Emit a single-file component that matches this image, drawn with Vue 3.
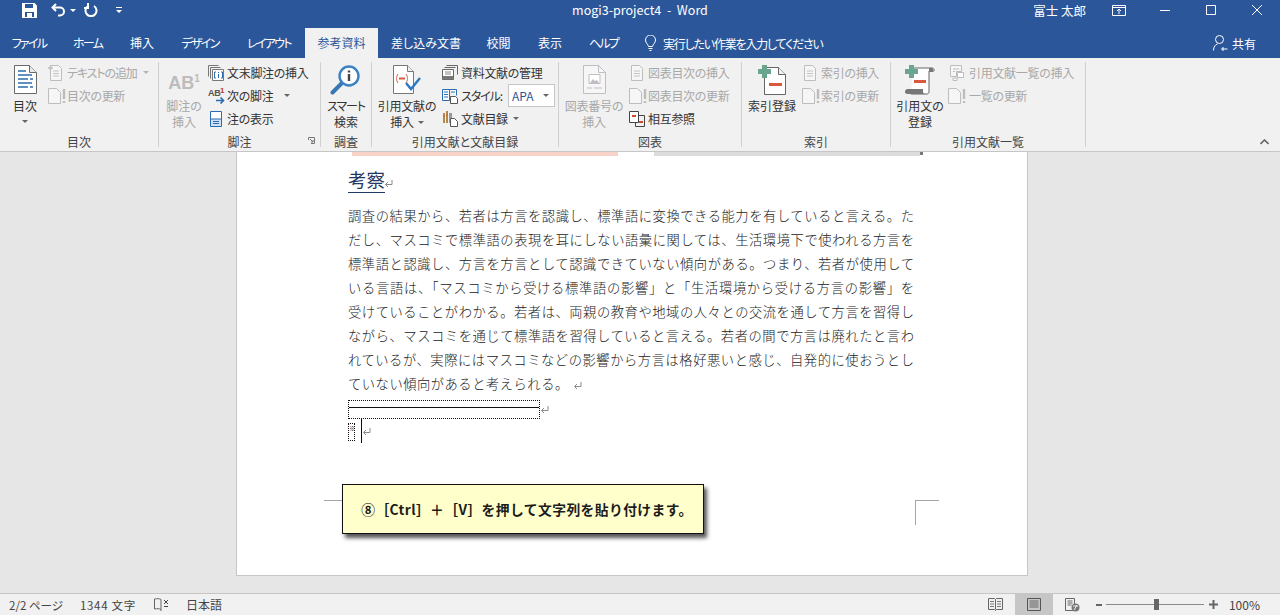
<script setup>
const tabs = [
  { label: 'ファイル', width: 58, tight: true },
  { label: 'ホーム', width: 59, tight: true },
  { label: '挿入', width: 50 },
  { label: 'デザイン', width: 66, tight: true },
  { label: 'レイアウト', width: 72, tight: true },
  { label: '参考資料', width: 73, active: true },
  { label: '差し込み文書', width: 96 },
  { label: '校閲', width: 49 },
  { label: '表示', width: 54 },
  { label: 'ヘルプ', width: 53, tight: true }
]

const bodyLines = [
  '調査の結果から、若者は方言を認識し、標準語に変換できる能力を有していると言える。た',
  'だし、マスコミで標準語の表現を耳にしない語彙に関しては、生活環境下で使われる方言を',
  '標準語と認識し、方言を方言として認識できていない傾向がある。つまり、若者が使用して',
  'いる言語は、「マスコミから受ける標準語の影響」と「生活環境から受ける方言の影響」を',
  '受けていることがわかる。若者は、両親の教育や地域の人々との交流を通して方言を習得し',
  'ながら、マスコミを通じて標準語を習得していると言える。若者の間で方言は廃れたと言わ',
  'れているが、実際にはマスコミなどの影響から方言は格好悪いと感じ、自発的に使おうとし'
]
</script>

<template>
  <div class="word">
    <svg class="defs" width="0" height="0">
      <symbol id="upd" viewBox="0 0 20 16">
        <path d="M.5.5h8l4 4v11H.5z" fill="#f6f6f6" stroke="#bdbdbd" />
        <path d="M16 1v10M16 13v2" stroke="#bdbdbd" stroke-width="2.4" />
      </symbol>
      <symbol id="lst" viewBox="0 0 16 16">
        <path d="M2.500.5h8l3 3v12h-11z" fill="#f6f6f6" stroke="#bdbdbd" />
        <path d="M5 6h6M5 8.500h6M5 11h6" stroke="#c4c4c4" />
      </symbol>
      <symbol id="ret" viewBox="0 0 9 9">
        <path d="M8 1v4.500H2M4 3 1.500 5.500 4 8" fill="none" stroke="#8a8a8a" />
      </symbol>
    </svg>

    <header class="titlebar">
      <div class="qat">
        <svg class="qat-save" width="15" height="15" viewBox="0 0 15 15">
          <path d="M0 0h12.500L15 2.500V15H0z" fill="#fff" />
          <path d="M3 1h8v4H3zM3 9h9v5H3z" fill="#2b579a" />
          <path d="M5 10h5v4H5z" fill="#fff" />
        </svg>
        <svg class="qat-undo" width="15" height="14" viewBox="0 0 15 14">
          <path d="M5 1 1.500 4.500 5 8M2 4.500h7a4 4 0 0 1 0 8H7" fill="none" stroke="#fff" stroke-width="2" />
        </svg>
        <span class="qat-caret"></span>
        <svg class="qat-redo" width="14" height="14" viewBox="0 0 14 14">
          <path d="M4 3a5.500 5.500 0 1 0 6 0M4 0v5H0" fill="none" stroke="#fff" stroke-width="2" />
        </svg>
        <svg class="qat-more" width="6" height="6" viewBox="0 0 6 6">
          <path d="M0 0h6v1H0zM0 3h6L3 6z" fill="#fff" />
        </svg>
      </div>
      <div class="doc-title">mogi3-project4&nbsp; - &nbsp;Word</div>
      <div class="win">
        <span class="user">富士 太郎</span>
        <button class="win-btn">
          <svg width="14" height="11" viewBox="0 0 14 11">
            <path d="M.5.5h13v10H.5zM.5 2.500h13M7 9V4.500M5 6l2-2 2 2" fill="none" stroke="#fff" />
          </svg>
        </button>
        <button class="win-btn">
          <svg width="10" height="1" viewBox="0 0 10 1"><path d="M0 .5h10" stroke="#fff" /></svg>
        </button>
        <button class="win-btn">
          <svg width="10" height="10" viewBox="0 0 10 10"><path d="M.5.5h9v9h-9z" fill="none" stroke="#fff" /></svg>
        </button>
        <button class="win-btn">
          <svg width="10" height="10" viewBox="0 0 10 10"><path d="M0 0l10 10M10 0 0 10" stroke="#fff" /></svg>
        </button>
      </div>
    </header>

    <nav class="tabs">
      <span
        v-for="tab in tabs"
        :key="tab.label"
        class="tab"
        :class="{ active: tab.active, tight: tab.tight }"
        :style="{ width: tab.width + 'px' }"
      >{{ tab.label }}</span>
      <span class="tell">
        <svg width="11" height="16" viewBox="0 0 11 16">
          <path d="M3.500 11.500C3 9 .5 8 .5 5a5 5 0 0 1 10 0c0 3-2.500 4-3 6.500zM3.500 13.500h4M4.500 15.500h2" fill="none" stroke="#fff" />
        </svg>
        <span class="tell-text">実行したい作業を入力してください</span>
      </span>
      <span class="share">
        <svg width="15" height="16" viewBox="0 0 15 16">
          <circle cx="6.500" cy="4.500" r="4" fill="none" stroke="#fff" />
          <path d="M.5 15.500c0-4 2-6 4-6.500M10 12v4M8 14h6.500" fill="none" stroke="#fff" />
        </svg>
        共有
      </span>
    </nav>

    <section class="ribbon">
      <div class="group g-toc">
        <div class="group-body">
          <div class="big b-toc">
            <svg class="big-icon" width="23" height="29" viewBox="0 0 23 29">
              <path d="M.5.5h15l7 7v21H.5z" fill="#fff" stroke="#6a6a6a" />
              <path d="M15.500.5v7h7" fill="#e8e8e8" stroke="#6a6a6a" />
              <path d="M4 6h8M4 10h14M4 14h10M4 18h14M4 22h10" stroke="#2b6cb0" stroke-width="1.500" />
              <path d="M16 14h3M16 22h3" stroke="#2b6cb0" stroke-width="1.500" />
            </svg>
            <span>目次</span>
            <i class="caret"></i>
          </div>
          <div class="stack">
            <div class="row off">
              <svg class="ico" viewBox="0 0 16 16">
                <use href="#lst" />
                <path d="M0 3h5M2.500 .5v5" stroke="#bdbdbd" stroke-width="1.500" />
              </svg>
              <span class="kana">テキストの追加</span><i class="caret off-caret"></i>
            </div>
            <div class="row off">
              <svg class="ico wide" viewBox="0 0 20 16"><use href="#upd" /></svg>
              目次の更新
            </div>
          </div>
        </div>
        <div class="group-label">目次</div>
      </div>

      <div class="group g-note">
        <div class="group-body">
          <div class="big off b-note">
            <div class="big-icon ab">AB<sup>1</sup></div>
            <span>脚注の<br />挿入</span>
          </div>
          <div class="stack">
            <div class="row">
              <svg class="ico" viewBox="0 0 16 16">
                <path d="M.5.5h10M2.500 2.500h10M.5.5v11M2.500 2.500v11" fill="none" stroke="#777" />
                <path d="M4.500 4.500h11v11h-11z" fill="#fff" stroke="#777" />
                <path d="M8 7H6.500v6H8M13 7h1.500v6H13M10.500 7v1M10.500 9v4" fill="none" stroke="#2b6cb0" />
              </svg>
              文末脚注の挿入
            </div>
            <div class="row">
              <span class="ico ab-small">AB<em>1</em>
                <svg width="9" height="7" viewBox="0 0 9 7"><path d="M0 3.500h7M4.500 .5 7.500 3.500 4.500 6.500" fill="none" stroke="#2b6cb0" stroke-width="1.600" /></svg>
              </span>
              次の脚注<i class="caret next-caret"></i>
            </div>
            <div class="row">
              <svg class="ico" viewBox="0 0 16 16">
                <path d="M2.500.5h11v15h-11z" fill="#fff" stroke="#2b6cb0" />
                <path d="M3 8h10v7H3z" fill="#cfe0f2" />
                <path d="M2.500 8h11M5 10.500h6M5 12.500h6" stroke="#2b6cb0" />
              </svg>
              注の表示
            </div>
          </div>
        </div>
        <div class="group-label">脚注</div>
        <svg class="launcher" width="7" height="7" viewBox="0 0 7 7">
          <path d="M.5 3V.5H6.500V6.500H3M2 2l3 3M3 5h2V3" fill="none" stroke="#777" />
        </svg>
      </div>

      <div class="group g-search">
        <div class="group-body">
          <div class="big b-search">
            <svg class="big-icon" width="32" height="30" viewBox="0 0 32 30">
              <path d="M12 18 2.500 27.500" stroke="#3a78b5" stroke-width="4" stroke-linecap="round" />
              <circle cx="19" cy="11" r="9.500" fill="#fff" stroke="#3a82c4" stroke-width="2.400" />
              <path d="M19 9v7M19 5.500v2" stroke="#444" stroke-width="2.400" />
            </svg>
            <span><span class="kana">スマート</span><br />検索</span>
          </div>
        </div>
        <div class="group-label">調査</div>
      </div>

      <div class="group g-cite">
        <div class="group-body">
          <div class="big b-cite">
            <svg class="big-icon" width="29" height="29" viewBox="0 0 29 29">
              <path d="M.5.5h14l6 6v22H.5z" fill="#fff" stroke="#777" />
              <path d="M14.500.5v6h6" fill="#eee" stroke="#777" />
              <path d="M5 9c-2 3-2 6 0 9M13 9c2 3 2 6 0 9" fill="none" stroke="#d9593d" />
              <path d="M6 13.500h6" stroke="#d9593d" stroke-width="2" />
              <path d="M13 18l5 6 9-11" fill="none" stroke="#2b79c2" stroke-width="2.400" />
            </svg>
            <span>引用文献の<br />挿入<i class="caret inline-caret"></i></span>
          </div>
          <div class="stack">
            <div class="row">
              <svg class="ico" viewBox="0 0 16 16">
                <path d="M4.500 .5h11v9M2.500 2.500h11" fill="none" stroke="#666" />
                <path d="M.5 4.500h11v10H.5z" fill="#fff" stroke="#666" />
                <path d="M.5 11h11v3.500H.5z" fill="#777" />
                <path d="M3 7h6M3 9h6" stroke="#888" />
              </svg>
              資料文献の管理
            </div>
            <div class="row">
              <svg class="ico" viewBox="0 0 16 16">
                <path d="M.5 1.500h7v11h-7zM7.500 1.500h7v6" fill="#fff" stroke="#2b6cb0" />
                <path d="M2 4h4M2 6.500h4M2 9h4M9 4h4" stroke="#2b6cb0" />
                <path d="M8.500 8.500h5l2 2v5h-7z" fill="#fff" stroke="#555" />
              </svg>
              <span class="kana">スタイル:</span>
              <span class="combo">APA<i class="caret combo-caret"></i></span>
            </div>
            <div class="row">
              <svg class="ico" viewBox="0 0 16 16">
                <path d="M1 2h2v10H1zM4 0h2v12H4z" fill="#b28a4c" />
                <path d="M7 2h3v10H7z" fill="#9a9a9a" />
                <path d="M1 5h2M4 4h2" stroke="#d9593d" />
                <path d="M8.500 7.500h4l3 3v5h-7z" fill="#fff" stroke="#555" />
              </svg>
              文献目録<i class="caret small-caret"></i>
            </div>
          </div>
        </div>
        <div class="group-label">引用文献と文献目録</div>
      </div>

      <div class="group g-fig">
        <div class="group-body">
          <div class="big off b-fig">
            <svg class="big-icon" width="23" height="29" viewBox="0 0 23 29">
              <path d="M.5.500h15l7 7v21H.5z" fill="#f6f6f6" stroke="#c2bcc4" />
              <path d="M15.500.500v7h7" fill="none" stroke="#c2bcc4" />
              <path d="M6 9.500h11v9H6z" fill="#fff" stroke="#c2bcc4" />
              <path d="M7 18l3-4 2 2 2-1 2 3z" fill="#c2bcc4" />
              <path d="M4 23h5M11 23h8" stroke="#c2bcc4" />
            </svg>
            <span>図表番号の<br />挿入</span>
          </div>
          <div class="stack">
            <div class="row off">
              <svg class="ico" viewBox="0 0 16 16"><use href="#lst" /></svg>
              図表目次の挿入
            </div>
            <div class="row off">
              <svg class="ico wide" viewBox="0 0 20 16"><use href="#upd" /></svg>
              図表目次の更新
            </div>
            <div class="row">
              <svg class="ico" viewBox="0 0 16 16">
                <path d="M.5.5h9v11h-9z" fill="#fff" stroke="#444" />
                <path d="M9.500 4.500h6v11h-9v-4" fill="none" stroke="#444" />
                <path d="M3 5h4M10 11h4" stroke="#d2492a" stroke-width="2" />
              </svg>
              相互参照
            </div>
          </div>
        </div>
        <div class="group-label">図表</div>
      </div>

      <div class="group g-idx">
        <div class="group-body">
          <div class="big b-idx">
            <svg class="big-icon" width="28" height="30" viewBox="0 0 28 30">
              <path d="M6.500 2.500h14l7 7v20h-21z" fill="#fff" stroke="#666" />
              <path d="M20.500 2.500v7h7" fill="#eee" stroke="#666" />
              <path d="M4 0h5v4h4v5H9v4H4V9H0V4h4z" fill="#6aa58d" />
              <path d="M11 18h13v3H11z" fill="#d9593d" />
            </svg>
            <span>索引登録</span>
          </div>
          <div class="stack">
            <div class="row off">
              <svg class="ico" viewBox="0 0 16 16"><use href="#lst" /></svg>
              索引の挿入
            </div>
            <div class="row off">
              <svg class="ico wide" viewBox="0 0 20 16"><use href="#upd" /></svg>
              索引の更新
            </div>
          </div>
        </div>
        <div class="group-label">索引</div>
      </div>

      <div class="group g-auth">
        <div class="group-body">
          <div class="big b-auth">
            <svg class="big-icon" width="30" height="30" viewBox="0 0 30 30">
              <path d="M8 3h19c2 0 2.500 2 2 3h-5v21c0 1-1 2-2 2H6" fill="#fff" stroke="#666" />
              <path d="M24 3h4v4h-4zM0 27c0-2 1-3 3-3h15v3c0 1 1 2 2 2H3c-2 0-3-1-3-2z" fill="#777" />
              <path d="M4 0h5v4h4v5H9v4H4V9H0V4h4z" fill="#6aa58d" />
              <path d="M9 15h12v3H9z" fill="#d9593d" />
            </svg>
            <span>引用文の<br />登録</span>
          </div>
          <div class="stack">
            <div class="row off auth-row">
              <svg class="ico" viewBox="0 0 16 16">
                <path d="M2.500.5h11v6h-5v5h-6zM5 13h4v2.500H5z" fill="#f6f6f6" stroke="#bdbdbd" />
                <path d="M9.500 7.500h6v5h-6z" fill="#fff" stroke="#bdbdbd" />
                <path d="M5 4h6M5 6.500h2" stroke="#bdbdbd" />
              </svg>
              引用文献一覧の挿入
            </div>
            <div class="row off auth-row">
              <svg class="ico wide" viewBox="0 0 20 16"><use href="#upd" /></svg>
              一覧の更新
            </div>
          </div>
        </div>
        <div class="group-label">引用文献一覧</div>
      </div>

      <svg class="collapse" width="9" height="6" viewBox="0 0 9 6">
        <path d="M.5 5 4.500 1 8.500 5" fill="none" stroke="#666" stroke-width="1.600" />
      </svg>
    </section>

    <main class="doc">
      <article class="page">
        <div class="cut-row">
          <span class="cut-pink"></span>
          <span class="cut-gray"></span>
          <span class="cut-tick"></span>
        </div>
        <h2 class="heading"><span>考察</span><svg class="ret" viewBox="0 0 9 9"><use href="#ret" /></svg></h2>
        <p v-for="line in bodyLines" :key="line" class="line">{{ line }}</p>
        <p class="line last">ていない傾向があると考えられる。<svg class="ret" viewBox="0 0 9 9"><use href="#ret" /></svg></p>
        <div class="sep-box">
          <div class="sep-frame"><span></span></div>
          <svg class="ret" viewBox="0 0 9 9"><use href="#ret" /></svg>
        </div>
        <div class="note-row">
          <span class="note-mark">※</span>
          <span class="cursor"></span>
          <svg class="ret" viewBox="0 0 9 9"><use href="#ret" /></svg>
        </div>

        <span class="crop crop-left"></span>
        <span class="crop crop-right"></span>
        <div class="callout">⑧［Ctrl］＋［V］を押して文字列を貼り付けます。</div>
      </article>
    </main>

    <footer class="status">
      <span class="st-pages">2/2 ページ</span>
      <span class="st-words">1344 文字</span>
      <svg class="st-book" width="15" height="14" viewBox="0 0 15 14">
        <path d="M7 1.500C5.500.5 3.500.5.500 1v10c3-.5 5-.5 6.500.5V1.500M7 13v-1.500" fill="none" stroke="#666" />
        <path d="M10 2l4 4M14 2l-4 4M10 8.500h4" stroke="#444" />
      </svg>
      <span class="st-lang">日本語</span>

      <div class="st-right">
        <svg width="15" height="13" viewBox="0 0 15 13">
          <path d="M.5.5h6l1 1 1-1h6v11h-6l-1 1-1-1h-6zM7.500 1.500v10" fill="none" stroke="#666" />
          <path d="M2 3.500h4M2 6h4M2 8.500h4M9 3.500h4M9 6h4M9 8.500h4" stroke="#777" />
        </svg>
        <span class="view-on">
          <svg width="14" height="13" viewBox="0 0 14 13">
            <path d="M.5.5h13v12H.5z" fill="none" stroke="#555" />
            <path d="M2.500 3h9M2.500 5h9M2.500 7h9M2.500 9h9" stroke="#666" />
          </svg>
        </span>
        <svg width="15" height="14" viewBox="0 0 15 14">
          <path d="M.5.5h9v12h-9zM2.500 3h5M2.500 5h5M2.500 7h4" fill="none" stroke="#666" />
          <circle cx="10.500" cy="9.500" r="4" fill="#777" />
          <path d="M8 8h5M9 12l3-5" stroke="#eee" />
        </svg>
        <span class="zoom-minus"></span>
        <span class="slider"><i></i></span>
        <svg class="zoom-plus" width="9" height="9" viewBox="0 0 9 9"><path d="M0 4.500h9M4.500 0v9" stroke="#666" stroke-width="2" /></svg>
        <span class="zoom-val">100%</span>
      </div>
    </footer>
  </div>
</template>

<style>
html, body {
  margin: 0;
  overflow: hidden;
}
</style>

<style scoped>
.word {
  width: 1280px;
  height: 615px;
  display: flex;
  flex-direction: column;
  overflow: hidden;
  font-family: "Noto Sans CJK JP", "Liberation Sans", sans-serif;
  font-feature-settings: "palt";
  font-size: 12px;
  color: #333;
  background: #e6e6e6;
}
.defs {
  position: absolute;
}

/* title bar */
.titlebar {
  height: 28px;
  flex: none;
  box-sizing: border-box;
  padding-bottom: 8px;
  display: grid;
  grid-template-columns: 1fr auto 1fr;
  align-items: center;
  background: #2b579a;
  color: #fff;
}
.qat {
  display: flex;
  align-items: center;
  padding-left: 22px;
}
.qat-undo {
  margin-left: 14px;
}
.qat-caret {
  margin-left: 4px;
  border: 3px solid transparent;
  border-top: 3px solid #fff;
  border-bottom: 0;
}
.qat-redo {
  margin-left: 8px;
}
.qat-more {
  margin-left: 18px;
}
.doc-title {
  font-family: "Noto Sans CJK JP", "Open Sans", sans-serif;
  font-size: 12.500px;
  line-height: 20px;
}
.win {
  display: flex;
  justify-content: flex-end;
  align-items: center;
  height: 20px;
}
.user {
  margin-right: 10px;
  font-size: 12.500px;
}
.win-btn {
  width: 46px;
  height: 20px;
  padding: 0;
  border: 0;
  background: none;
  display: flex;
  align-items: center;
  justify-content: center;
}

/* tabs */
.tabs {
  height: 30px;
  flex: none;
  display: flex;
  background: #2b579a;
  color: #fff;
  line-height: 29px;
}
.tab {
  text-align: center;
}
.tab.tight {
  letter-spacing: -1.700px;
}
.tab.active {
  background: #f1f1f1;
  color: #2b579a;
}
.tell {
  margin-left: 15px;
  display: flex;
  align-items: center;
  gap: 7px;
}
.tell-text {
  letter-spacing: -1.200px;
}
.share {
  margin-left: auto;
  padding-right: 24px;
  display: flex;
  align-items: center;
  gap: 4px;
}

/* ribbon */
.ribbon {
  height: 94px;
  flex: none;
  box-sizing: border-box;
  padding-top: 4px;
  display: flex;
  align-items: flex-start;
  position: relative;
  background: #f1f1f1;
  border-bottom: 1px solid #c6c6c6;
}
.group {
  height: 85px;
  box-sizing: border-box;
  display: flex;
  flex-direction: column;
  position: relative;
  border-right: 1px solid #d0d0d0;
}
.group-body {
  height: 72px;
  flex: none;
  display: flex;
}
.group-label {
  flex: none;
  text-align: center;
  line-height: 16px;
  color: #444;
}
.g-toc { width: 159px; }
.g-note { width: 162px; }
.g-search { width: 51px; }
.g-cite { width: 187px; }
.g-fig { width: 183px; }
.g-idx { width: 149px; }
.g-auth { width: 195px; }

.big {
  display: flex;
  flex-direction: column;
  align-items: center;
  text-align: center;
  line-height: 16px;
  flex: none;
}
.big-icon {
  height: 36px;
  margin-top: 3px;
  margin-bottom: -3px;
  display: block;
  flex: none;
}
svg.big-icon {
  height: 29px;
  margin-top: 3px;
  margin-bottom: 4px;
}
.b-search svg.big-icon, .b-idx svg.big-icon, .b-auth svg.big-icon {
  height: 30px;
  margin-bottom: 3px;
}
.b-toc { width: 36px; margin-left: 7px; margin-right: 5px; }
.b-note { width: 42px; margin-left: 4px; margin-right: 3px; }
.b-search { width: 46px; margin-left: 2px; }
.b-cite { width: 60px; margin-left: 5px; margin-right: 5px; letter-spacing: -.2px; }
.b-fig { width: 60px; margin-left: 5px; margin-right: 5px; letter-spacing: -.2px; }
.b-idx { width: 50px; margin-left: 5px; margin-right: 5px; }
.b-auth { width: 50px; margin-left: 4px; margin-right: 3px; }

.off, .off span {
  color: #a8a8a8;
}
.ab {
  font-family: "Liberation Sans", sans-serif;
  font-weight: 700;
  font-size: 18px;
  line-height: 36px;
  color: #bcbcbc;
}
.ab sup {
  font-size: 10px;
  line-height: 0;
}
.stack {
  margin-top: -1px;
  display: flex;
  flex-direction: column;
}
.row {
  height: 23px;
  display: flex;
  align-items: center;
  white-space: nowrap;
  gap: 3px;
  letter-spacing: -.3px;
}
.kana {
  letter-spacing: -1.100px;
}
.ico {
  width: 16px;
  height: 16px;
  flex: none;
}
.ico.wide {
  width: 20px;
  margin-right: -4px;
}
.auth-row {
  gap: 5px;
}
.ab-small {
  position: relative;
  font-family: "Liberation Sans", sans-serif;
  font-size: 9px;
  font-weight: 700;
  line-height: 10px;
  color: #555;
  letter-spacing: -.3px;
}
.ab-small em {
  position: absolute;
  top: -2px;
  left: 12px;
  font-style: normal;
  font-size: 8px;
  color: #c0392b;
}
.ab-small svg {
  position: absolute;
  left: 8px;
  top: 9px;
}
.caret {
  display: block;
  border: 3px solid transparent;
  border-top: 3px solid #666;
  border-bottom: 0;
  width: 0;
  margin-top: 6px;
}
.off-caret {
  border-top-color: #b5b5b5;
  margin: 0 0 0 3px;
}
.next-caret {
  margin: 0 0 0 8px;
}
.small-caret {
  margin: 0 0 0 2px;
}
.inline-caret {
  display: inline-block;
  margin: 0 0 2px 4px;
  vertical-align: middle;
}
.combo {
  width: 47px;
  height: 23px;
  margin-left: 3px;
  box-sizing: border-box;
  padding: 0 5px 0 3px;
  display: flex;
  align-items: center;
  justify-content: space-between;
  background: #fff;
  border: 1px solid #c6c6c6;
  color: #2b579a;
  letter-spacing: 0;
}
.combo-caret {
  margin: 0;
}
.launcher {
  position: absolute;
  right: 5px;
  bottom: 3px;
}
.collapse {
  position: absolute;
  right: 11px;
  bottom: 6px;
}

/* document */
.doc {
  flex: 1;
  min-height: 0;
  padding-left: 236px;
}
.page {
  width: 792px;
  height: 424px;
  box-sizing: border-box;
  padding-left: 111px;
  position: relative;
  background: #fff;
  border: 1px solid #c6c6c6;
  border-top: 0;
  font-weight: 300;
  color: #222;
}
.cut-row {
  height: 4px;
  display: flex;
  margin-left: 4px;
}
.cut-pink {
  width: 266px;
  background: #f8d3ca;
}
.cut-gray {
  width: 266px;
  margin-left: 36px;
  background: #dcdcdc;
}
.cut-tick {
  width: 3px;
  height: 3px;
  background: #777;
}
.heading {
  height: 48px;
  margin: 0;
  box-sizing: border-box;
  padding-top: 12px;
  display: flex;
  align-items: flex-start;
  font-size: 18.500px;
  font-weight: 400;
  line-height: 25px;
  color: #1f3864;
}
.heading span {
  display: block;
  height: 24px;
  border-bottom: 1px solid #1f3864;
  line-height: 23px;
}
.heading .ret {
  margin: 11px 0 0 -1px;
}
.line {
  width: 566px;
  height: 24px;
  margin: 0;
  font-size: 13.300px;
  line-height: 24px;
  white-space: nowrap;
  text-align: justify;
  text-align-last: justify;
  font-feature-settings: normal;
}
.line.last {
  text-align-last: left;
  letter-spacing: .5px;
}
.ret {
  width: 9px;
  height: 9px;
  flex: none;
}
.last .ret {
  margin-left: 4px;
  vertical-align: -1px;
}
.sep-box {
  height: 19px;
  margin-top: 4px;
  display: flex;
  align-items: center;
}
.sep-frame {
  width: 192px;
  height: 19px;
  box-sizing: border-box;
  border: 1px dotted #111;
  padding-top: 6px;
}
.sep-frame span {
  display: block;
  height: 1px;
  background: #111;
}
.note-row {
  height: 24px;
  display: flex;
  align-items: center;
}
.note-mark {
  width: 7px;
  height: 18px;
  margin-top: 2px;
  box-sizing: border-box;
  border: 1px dotted #111;
  font-size: 7px;
  font-weight: 400;
  font-feature-settings: normal;
  line-height: 9px;
  overflow: hidden;
}
.cursor {
  width: 1px;
  height: 24px;
  margin-left: 6px;
  background: #111;
}
.crop {
  position: absolute;
  width: 24px;
  height: 24px;
  top: 348px;
  border-top: 1px solid #a6a6a6;
}
.crop-left {
  left: 87px;
  border-right: 1px solid #a6a6a6;
}
.crop-right {
  left: 678px;
  width: 23px;
  border-left: 1px solid #a6a6a6;
}
.callout {
  position: absolute;
  left: 105px;
  top: 332px;
  width: 362px;
  height: 50px;
  box-sizing: border-box;
  padding-left: 8px;
  display: flex;
  align-items: center;
  justify-content: center;
  background: #ffffcc;
  border: 1px solid #111;
  box-shadow: 3px 4px 4px #555;
  font-size: 13.800px;
  letter-spacing: .4px;
  font-weight: 700;
  font-feature-settings: normal;
  color: #1c1c1c;
  white-space: nowrap;
}

/* status bar */
.status {
  height: 22px;
  flex: none;
  box-sizing: border-box;
  display: flex;
  align-items: center;
  background: #f1f1f1;
  border-top: 1px solid #c6c6c6;
  font-size: 11.500px;
  color: #444;
}
.st-pages {
  margin-left: 9px;
}
.st-words {
  margin-left: 17px;
  letter-spacing: .7px;
}
.st-book {
  margin-left: 18px;
}
.st-lang {
  margin-left: 17px;
  font-size: 12px;
}
.st-right {
  margin-left: auto;
  height: 100%;
  display: flex;
  align-items: center;
  padding-right: 20px;
}
.view-on {
  width: 38px;
  height: 100%;
  margin: 0 12px;
  display: flex;
  align-items: center;
  justify-content: center;
  background: #c6c6c6;
}
.zoom-minus {
  width: 6px;
  height: 2px;
  margin-left: 16px;
  background: #666;
}
.slider {
  width: 98px;
  height: 1px;
  margin-left: 4px;
  position: relative;
  background: #8a8a8a;
}
.slider i {
  position: absolute;
  left: 48px;
  top: -5px;
  width: 5px;
  height: 11px;
  background: #666;
}
.zoom-plus {
  margin-left: 5px;
}
.zoom-val {
  margin-left: 11px;
  font-size: 12px;
}
</style>
